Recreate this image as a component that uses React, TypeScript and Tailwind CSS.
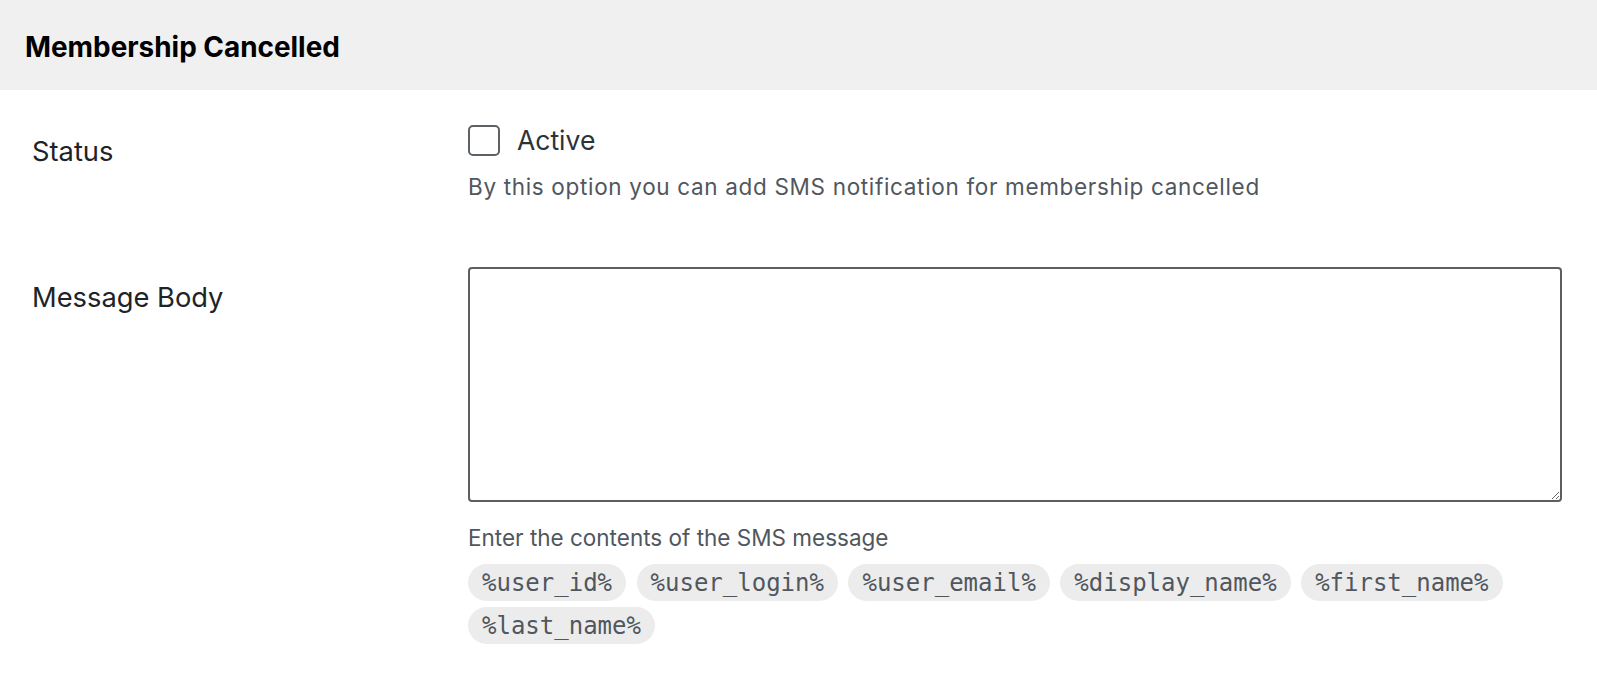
import { useState } from "react";

const TAGS = [
  "%user_id%",
  "%user_login%",
  "%user_email%",
  "%display_name%",
  "%first_name%",
  "%last_name%",
];

export default function App() {
  const [active, setActive] = useState(false);
  const [body, setBody] = useState("");

  return (
    <div className="w-full min-h-[677px] bg-white font-['Inter','Noto_Sans',sans-serif]">
      {/* Section header */}
      <div className="h-[90px] bg-[#f0f0f0] flex items-center pl-[25px] pt-[6px]">
        <h3 className="text-[27.9px] font-bold text-black leading-none">Membership Cancelled</h3>
      </div>

      {/* Status row */}
      <div className="flex pb-[65px]">
        <div className="w-[468px] shrink-0 pl-[32px] pt-[45px]">
          <span className="text-[27.3px] leading-[34px] text-[#1d2327]">Status</span>
        </div>
        <div className="flex-1 pr-[35px] pt-[35px]">
          <label className="flex items-center gap-[17px] h-[31px] cursor-pointer">
            <input
              type="checkbox"
              checked={active}
              onChange={(e) => setActive(e.target.checked)}
              className="appearance-none w-[32px] h-[31px] rounded-[5px] border-2 border-[#5c6166] bg-white checked:bg-[#2271b1]"
            />
            <span className="text-[26.5px] leading-[31px] text-[#2c3338]">Active</span>
          </label>
          <p className="mt-[16px] text-[22.5px] leading-[30px] tracking-[0.67px] text-[#50575e]">
            By this option you can add SMS notification for membership cancelled
          </p>
        </div>
      </div>

      {/* Message body row */}
      <div className="flex">
        <div className="w-[468px] shrink-0 pl-[32px] pt-[14px]">
          <span className="text-[27.3px] leading-[34px] text-[#1d2327]">Message Body</span>
        </div>
        <div className="flex-1 pr-[35px]">
          <textarea
            value={body}
            onChange={(e) => setBody(e.target.value)}
            className="block w-full h-[235px] border-2 border-[#5c5f62] rounded-[4px] bg-white outline-none p-2 text-[22px]"
          />
          <p className="mt-[21px] text-[22.5px] leading-[30px] text-[#50575e]">
            Enter the contents of the SMS message
          </p>
          <div className="mt-[11px] flex flex-wrap gap-x-[10.5px] gap-y-[6px]">
            {TAGS.map((t) => (
              <code
                key={t}
                className="h-[37px] px-[14px] flex items-center rounded-full bg-[#ececec] text-[#50575e] text-[24px] font-['DejaVu_Sans_Mono',monospace]"
              >
                {t}
              </code>
            ))}
          </div>
        </div>
      </div>
    </div>
  );
}
